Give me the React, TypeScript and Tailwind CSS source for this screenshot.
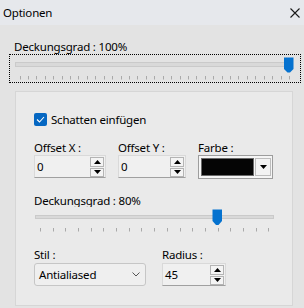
import React from "react";

const FONT = "font-['Noto_Sans',sans-serif]";
const TXT = "text-[11.5px] leading-[15px] tracking-[-0.2px]";

function Spin() {
  return (
    <div className="flex flex-col gap-[1px]">
      <div className="w-[14px] h-[10px] border border-[#b4b4b4] bg-[#f4f4f4] flex items-center justify-center">
        <svg width="7" height="4" viewBox="0 0 7 4">
          <path d="M3.5 0 L7 4 L0 4 Z" fill="#000" />
        </svg>
      </div>
      <div className="w-[14px] h-[9px] border border-[#b4b4b4] bg-[#f4f4f4] flex items-center justify-center">
        <svg width="7" height="4" viewBox="0 0 7 4">
          <path d="M0 0 L7 0 L3.5 4 Z" fill="#000" />
        </svg>
      </div>
    </div>
  );
}

function NumInput({ w, value }: { w: string; value: string }) {
  return (
    <div
      className={`${w} h-[23px] bg-[#f0f0f0] border border-[#d9d9d9] border-b-[#a0a0a0] flex items-center justify-between pl-[2px] pr-[1px]`}
    >
      <span className={`${TXT} text-black`}>{value}</span>
      <Spin />
    </div>
  );
}

function Label({ children }: { children: React.ReactNode }) {
  return <div className={`h-[15px] ${TXT} text-black whitespace-nowrap`}>{children}</div>;
}

function ticks(x1: number, x2: number, n: number, y1: number, y2: number) {
  const out: React.ReactNode[] = [];
  for (let i = 0; i <= n; i++) {
    const x = Math.round(x1 + ((x2 - x1) * i) / n) + 0.5;
    out.push(<line key={i} x1={x} x2={x} y1={y1} y2={y2} stroke="#a9a9a9" strokeWidth="1" />);
  }
  return out;
}

export default function App() {
  return (
    <div className={`${FONT} w-[304px] h-[308px] bg-[#e3e3e3] overflow-hidden flex flex-col text-black`}>
      {/* Title bar */}
      <div className="h-[25px] bg-[#e6e8ec] flex items-center justify-between pl-[3px] pr-[4px] shrink-0">
        <span className={TXT}>Optionen</span>
        <svg width="10" height="10" viewBox="0 0 10 10">
          <path d="M0.5 0.5 L9.5 9.5 M9.5 0.5 L0.5 9.5" stroke="#1a1a1a" strokeWidth="1.1" />
        </svg>
      </div>

      {/* Opacity label */}
      <div className="pl-[14px] pt-[14px]">
        <Label>Deckungsgrad : 100%</Label>
      </div>

      {/* Slider 1 with focus rect */}
      <div className="ml-[9px] w-[292px] h-[29px] border border-dotted border-black">
        <svg width="290" height="27" viewBox="0 0 290 27" className="block">
          <rect x="5.5" y="7.5" width="277" height="4" fill="#d9d9d9" stroke="#cacaca" />
          {ticks(9.5, 279, 32, 21, 24.5)}
          <path d="M274 2.5 L283.5 2.5 L283.5 14 L280 17.5 L277.5 17.5 L274 14 Z" fill="#0572cf" />
        </svg>
      </div>

      {/* Group panel */}
      <div className="ml-[15px] mt-[8px] w-[278px] h-[215px] bg-[#eaeaea] border border-[#d6d6d6] pl-[18px] pt-[21px] flex flex-col">
        <div className="flex items-center gap-[4px] h-[13px]">
          <div className="w-[13px] h-[13px] rounded-[2px] bg-[#0567c2] flex items-center justify-center">
            <svg width="9" height="7" viewBox="0 0 9 7">
              <path d="M1 3.5 L3.5 6 L8 1" stroke="#fff" strokeWidth="1.1" fill="none" />
            </svg>
          </div>
          <span className={TXT}>Schatten einfügen</span>
        </div>

        <div className="flex mt-[14px]">
          <div className="flex flex-col w-[84px]">
            <Label>Offset X :</Label>
            <NumInput w="w-[72px]" value="0" />
          </div>
          <div className="flex flex-col w-[80px]">
            <Label>Offset Y :</Label>
            <NumInput w="w-[68px]" value="0" />
          </div>
          <div className="flex flex-col">
            <Label>Farbe :</Label>
            <div className="w-[75px] h-[24px] border border-[#9d9d9d] bg-[#f5f5f5] flex items-center pl-[2px] pr-[1px] gap-[1px]">
              <div className="w-[55px] h-[18px] bg-[#050505] border border-[#6a6a6a]" />
              <div className="w-[16px] h-[18px] border border-[#bdbdbd] bg-[#f3f3f3] flex items-center justify-center">
                <svg width="7" height="4" viewBox="0 0 7 4">
                  <path d="M0 0 L7 0 L3.5 4 Z" fill="#000" />
                </svg>
              </div>
            </div>
          </div>
        </div>

        <div className="mt-[14px] h-[14px] overflow-hidden">
          <Label>Deckungsgrad : 80%</Label>
        </div>
        <svg width="258" height="25" viewBox="0 0 258 25" className="block mt-[1px]">
          <rect x="1.5" y="7.5" width="238" height="3" fill="#d9d9d9" stroke="#cacaca" />
          {ticks(6, 234.3, 18, 20, 23.5)}
          <path d="M178.5 1.5 L188 1.5 L188 13 L184.5 17 L182 17 L178.5 13 Z" fill="#0572cf" />
        </svg>

        <div className="flex mt-[14px]">
          <div className="flex flex-col w-[128px]">
            <Label>Stil :</Label>
            <div className="w-[112px] h-[23px] mt-[1px] rounded-[3px] border border-[#c6c6c6] bg-[#efefef] flex items-center justify-between pl-[4px] pr-[5px]">
              <span className={TXT}>Antialiased</span>
              <svg width="8" height="5" viewBox="0 0 8 5">
                <path d="M0.5 0.5 L4 4 L7.5 0.5" stroke="#555" strokeWidth="1" fill="none" />
              </svg>
            </div>
          </div>
          <div className="flex flex-col">
            <Label>Radius :</Label>
            <div className="mt-[1px]">
              <NumInput w="w-[64px]" value="45" />
            </div>
          </div>
        </div>
      </div>
    </div>
  );
}
